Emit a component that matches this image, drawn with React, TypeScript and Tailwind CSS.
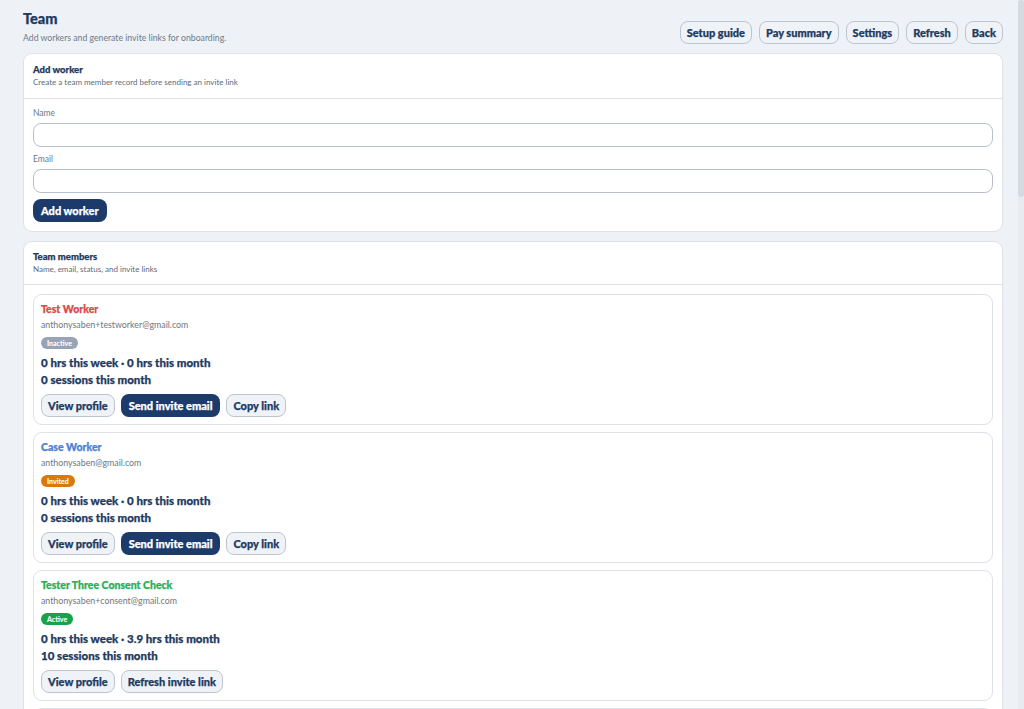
import React from 'react';

type Member = {
  id: number;
  name: string;
  email: string;
  status: 'Inactive' | 'Invited' | 'Active';
  week: string;
  month: string;
  sessions: number;
};

const members: Member[] = [
  { id: 1, name: 'Test Worker', email: 'anthonysaben+testworker@gmail.com', status: 'Inactive', week: '0', month: '0', sessions: 0 },
  { id: 2, name: 'Case Worker', email: 'anthonysaben@gmail.com', status: 'Invited', week: '0', month: '0', sessions: 0 },
  { id: 3, name: 'Tester Three Consent Check', email: 'anthonysaben+consent@gmail.com', status: 'Active', week: '0', month: '3.9', sessions: 10 },
  { id: 4, name: 'Another Worker', email: 'anthonysaben+another@gmail.com', status: 'Invited', week: '0', month: '0', sessions: 0 },
];

const nameColor = {
  Inactive: 'text-[#d94b4b]',
  Invited: 'text-[#4a7fd4]',
  Active: 'text-[#25b05a]',
};

const badgeColor = {
  Inactive: 'bg-[#97a3b6]',
  Invited: 'bg-[#d9780b]',
  Active: 'bg-[#17a34a]',
};

// heavy weight, a touch of stroke to match the reference's black-weight font
const heavy = 'font-black [-webkit-text-stroke:0.25px_currentColor]';

const lightBtn =
  'h-[23px] px-[6px] rounded-[8px] border border-[#bcc4ce] bg-[#eff3f7] text-[11px] text-[#1e3a5f] leading-none ' + heavy;
const darkBtn =
  'h-[23px] px-[8px] rounded-[8px] bg-[#1c3b6b] text-[11px] text-white leading-none ' + heavy;

const App: React.FC = () => {
  return (
    <div className="h-screen overflow-hidden flex bg-[#eef2f6] text-[#1e3a5f]" style={{ fontFamily: 'Lato, "Noto Sans", sans-serif' }}>
      <main className="flex-1 pl-[23px] pr-[15px] pt-[9px]">
        <div className="flex items-end justify-between">
          <div>
            <h1 className={'text-[14.5px] leading-[20px] ' + heavy}>Team</h1>
            <p className="mt-[3px] text-[8.7px] text-[#6b7a8c] leading-[12px]">Add workers and generate invite links for onboarding.</p>
          </div>
          <div className="flex gap-[7px]">
            {['Setup guide', 'Pay summary', 'Settings', 'Refresh', 'Back'].map((b) => (
              <button key={b} className={lightBtn}>{b}</button>
            ))}
          </div>
        </div>

        <section className="mt-[9px] bg-white border border-[#dde2e8] rounded-[9px]">
          <div className="px-[9px] pt-[10px] pb-[10px] border-b border-[#dde2e8]">
            <h2 className={'text-[9.5px] leading-[12px] ' + heavy}>Add worker</h2>
            <p className="mt-[1px] text-[8px] text-[#5d6b7c] leading-[11px]">Create a team member record before sending an invite link</p>
          </div>
          <div className="px-[9px] pt-[8px] pb-[9px]">
            <label className="block text-[8.5px] text-[#6b7a8c] leading-[12px]">Name</label>
            <input className="mt-[4px] block w-full h-[24px] rounded-[8px] border border-[#b9c0c9] bg-white" />
            <label className="mt-[6px] block text-[8.5px] text-[#6b7a8c] leading-[12px]">Email</label>
            <input className="mt-[4px] block w-full h-[24px] rounded-[8px] border border-[#b9c0c9] bg-white" />
            <button className={darkBtn + ' mt-[6px]'}>Add worker</button>
          </div>
        </section>

        <section className="mt-[9px] bg-white border border-[#dde2e8] rounded-[9px]">
          <div className="px-[9px] pt-[9px] pb-[9px] border-b border-[#dde2e8]">
            <h2 className={'text-[9.5px] leading-[12px] ' + heavy}>Team members</h2>
            <p className="mt-[1px] text-[8px] text-[#5d6b7c] leading-[11px]">Name, email, status, and invite links</p>
          </div>
          <div className="px-[9px] pt-[9px] flex flex-col gap-[7px]">
            {members.map((m) => (
              <div key={m.id} className="border border-[#dde2e8] rounded-[9px] px-[7px] pt-[7px] pb-[7px]">
                <div className={'text-[10.5px] leading-[14px] ' + heavy + ' ' + nameColor[m.status]}>{m.name}</div>
                <div className="mt-[3px] text-[8.8px] text-[#6b7684] leading-[12px]">{m.email}</div>
                <div className="mt-[6px] flex">
                  <span className={'flex items-center h-[12px] px-[6px] rounded-full text-[7px] font-black text-white leading-none ' + badgeColor[m.status]}>{m.status}</span>
                </div>
                <div className={'mt-[7px] text-[11.5px] leading-[14px] ' + heavy}>{m.week} hrs this week · {m.month} hrs this month</div>
                <div className={'mt-[3px] text-[11.5px] leading-[14px] ' + heavy}>{m.sessions} sessions this month</div>
                <div className="mt-[7px] flex gap-[6px]">
                  <button className={lightBtn}>View profile</button>
                  {m.status === 'Active' ? (
                    <button className={lightBtn}>Refresh invite link</button>
                  ) : (
                    <>
                      <button className={darkBtn}>Send invite email</button>
                      <button className={lightBtn}>Copy link</button>
                    </>
                  )}
                </div>
              </div>
            ))}
          </div>
        </section>
      </main>
      <div className="w-[6px] bg-[#e8ecf0]">
        <div className="h-[197px] bg-[#d5dae0] rounded-full" />
      </div>
    </div>
  );
};

export default App;
